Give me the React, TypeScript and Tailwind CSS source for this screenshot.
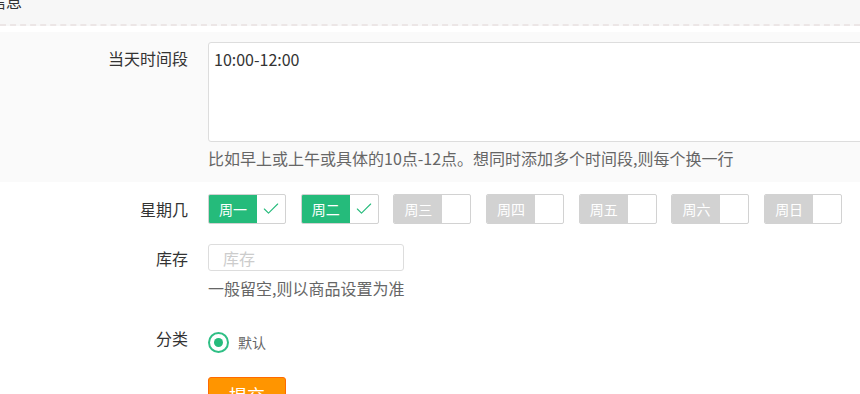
import { Check } from "lucide-react";

const days = [
  { name: "周一", on: true },
  { name: "周二", on: true },
  { name: "周三", on: false },
  { name: "周四", on: false },
  { name: "周五", on: false },
  { name: "周六", on: false },
  { name: "周日", on: false },
];

function Label({ children }: { children: React.ReactNode }) {
  return (
    <div className="w-[208px] shrink-0 pr-[20px] text-right text-[16px] leading-[22px] text-[#333]">
      {children}
    </div>
  );
}

export default function App() {
  return (
    <div
      className="min-h-[394px] w-[860px] overflow-hidden bg-white"
      style={{ fontFamily: '"Noto Sans CJK SC", "Noto Sans", sans-serif' }}>
      {/* section title strip */}
      <div className="flex h-[26px] items-start bg-[#f7f7f7] border-b-2 border-dashed border-[#ece6e6]">
        <div className="-ml-[10px] -mt-[10px] text-[16px] leading-[22px] text-[#333]">
          信息
        </div>
      </div>

      {/* time slot block */}
      <div className="mt-[6px] bg-[#fafafa] pt-[10px] pb-[13px]">
        <div className="flex">
          <div className="pt-[5px]">
            <Label>当天时间段</Label>
          </div>
          <div className="flex-1">
            <div className="h-[100px] w-[700px] rounded-[3px] border border-[#ddd] bg-white px-[5px] py-[5px] text-[16px] leading-[22px] text-[#333]">
              10:00-12:00
            </div>
            <div className="mt-[5px] text-[16px] leading-[22px] text-[#666]">
              比如早上或上午或具体的10点-12点。想同时添加多个时间段,则每个换一行
            </div>
          </div>
        </div>
      </div>

      {/* weekdays */}
      <div className="mt-[12px] flex items-center">
        <Label>星期几</Label>
        <div className="flex gap-[14.7px]">
          {days.map((d) => (
            <div
              key={d.name}
              className="flex h-[30px] w-[78px] overflow-hidden rounded-[2px] border border-[#d2d2d2] bg-white">
              <div
                className={
                  d.on
                    ? "flex w-[48px] items-center justify-center bg-[#25bb7b] text-[14px] text-white"
                    : "flex w-[48px] items-center justify-center bg-[#d2d2d2] text-[14px] text-white"
                }>
                {d.name}
              </div>
              <div className="flex flex-1 items-center justify-center">
                {d.on && (
                  <Check className="h-[20px] w-[20px] text-[#25bb7b]" strokeWidth={1.3} />
                )}
              </div>
            </div>
          ))}
        </div>
      </div>

      {/* stock */}
      <div className="mt-[20px] flex">
        <div className="pt-[3px]">
          <Label>库存</Label>
        </div>
        <div>
          <div className="flex h-[27px] w-[196px] items-center rounded-[3px] border border-[#ddd] px-[14px] text-[16px] text-[#ccc]">
            库存
          </div>
          <div className="mt-[6px] text-[16px] leading-[22px] text-[#666]">
            一般留空,则以商品设置为准
          </div>
        </div>
      </div>

      {/* category */}
      <div className="mt-[28px] flex items-start">
        <Label>分类</Label>
        <div className="mt-[5px] flex items-center gap-[9px]">
          <div className="flex h-[21px] w-[21px] items-center justify-center rounded-full border-2 border-[#2fbf85]">
            <div className="h-[9px] w-[9px] rounded-full bg-[#25bb7b]" />
          </div>
          <span className="text-[14px] text-[#666]">默认</span>
        </div>
      </div>

      {/* submit */}
      <div className="mt-[24px] pl-[208px]">
        <button className="h-[36px] w-[78px] rounded-[3px] border border-[#ff6a00] bg-[#ff9500] text-[18px] text-white">
          提交
        </button>
      </div>
    </div>
  );
}
